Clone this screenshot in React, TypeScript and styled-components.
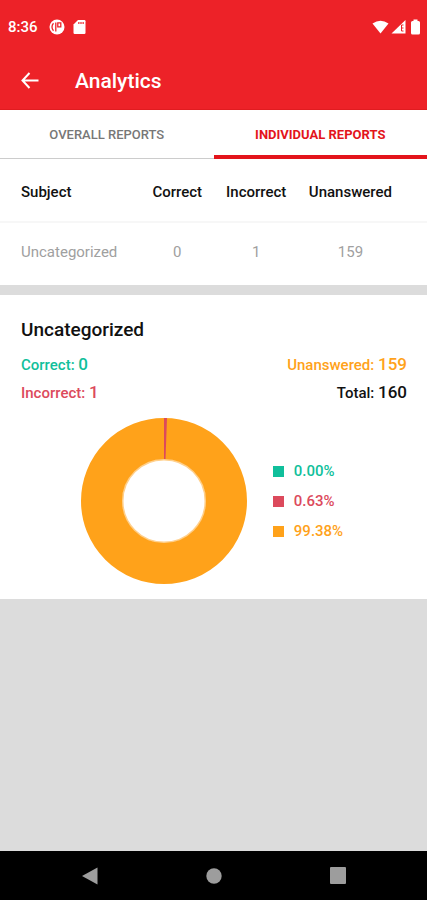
import React from 'react';
import styled, { createGlobalStyle } from 'styled-components';

const GlobalStyle = createGlobalStyle`
  * { box-sizing: border-box; }
  body { margin: 0; background: #dcdcdc; font-family: Roboto, sans-serif; }
  button { font-family: inherit; border: 0; padding: 0; background: none; cursor: pointer; }
`;

const Screen = styled.div`
  display: flex;
  flex-direction: column;
  min-height: 100vh;
`;

const Header = styled.header`
  background: #ed2228;
  color: #fff;
  border-bottom: 1px solid #e01c20;
`;

const StatusBar = styled.div`
  display: flex;
  align-items: center;
  justify-content: space-between;
  height: 53px;
  padding: 0 5px 0 8px;
`;

const StatusGroup = styled.div<{ $gap: number }>`
  display: flex;
  align-items: center;
  gap: ${(p) => p.$gap}px;
`;

const Clock = styled.span`
  font-size: 15px;
  line-height: 18px;
  font-weight: 500;
  margin-right: 3px;
`;

const AppBar = styled.div`
  display: flex;
  align-items: center;
  gap: 35px;
  height: 56px;
  padding: 0 20px;
`;

const BackButton = styled.button`
  display: flex;
  color: inherit;
`;

const Title = styled.h1`
  margin: 0;
  font-size: 21px;
  line-height: 28px;
  font-weight: 500;
`;

const Tabs = styled.div`
  display: grid;
  grid-template-columns: 1fr 1fr;
  background: #fff;
`;

const Tab = styled.button<{ $active?: boolean }>`
  height: 49px;
  font-size: 13px;
  line-height: 16px;
  font-weight: ${(p) => (p.$active ? 700 : 500)};
  color: ${(p) => (p.$active ? '#e3141b' : '#777')};
  border-top: ${(p) => (p.$active ? 4 : 1)}px solid transparent;
  border-bottom: ${(p) => (p.$active ? '4px solid #e3141b' : '1px solid #ccc')};
`;

const Report = styled.table`
  width: 100%;
  table-layout: fixed;
  border-collapse: separate;
  border-spacing: 0;
  background: #fff;
`;

const Col = styled.col<{ $share: number }>`
  width: ${(p) => p.$share}%;
`;

const HeadCell = styled.th`
  height: 64px;
  padding: 3px 0 0;
  border-bottom: 2px solid #f7f7f7;
  font-size: 15px;
  line-height: 20px;
  font-weight: 500;
  color: #111;
  &:first-child { padding-left: 21px; text-align: left; }
  &:last-child { padding-right: 25px; }
`;

const Cell = styled.td`
  height: 62px;
  padding: 0 0 4px;
  font-size: 15px;
  line-height: 20px;
  text-align: center;
  color: #a0a0a0;
  &:first-child { padding-left: 21px; text-align: left; }
  &:last-child { padding-right: 25px; }
`;

const Card = styled.section`
  margin-top: 10px;
  padding: 21px 20px 15px 21px;
  background: #fff;
`;

const CardTitle = styled.h2`
  margin: 0 0 7px;
  font-size: 19px;
  line-height: 28px;
  font-weight: 500;
  color: #111;
`;

const Totals = styled.div`
  display: grid;
  grid-template-columns: 1fr auto;
  grid-auto-rows: 28px;
`;

const Total = styled.div<{ $color: string; $end?: boolean }>`
  font-size: 15px;
  line-height: 28px;
  font-weight: 500;
  color: ${(p) => p.$color};
  text-align: ${(p) => (p.$end ? 'right' : 'left')};
`;

const Count = styled.span`
  font-size: 17px;
  line-height: 20px;
`;

const Chart = styled.div`
  display: flex;
  align-items: center;
  justify-content: center;
  gap: 26px;
  margin-top: 11px;
  padding-right: 4px;
`;

const Legend = styled.ul`
  margin: 0;
  padding: 0;
  list-style: none;
`;

const LegendItem = styled.li<{ $color: string }>`
  display: flex;
  align-items: center;
  gap: 10px;
  font-size: 15px;
  line-height: 30px;
  font-weight: 500;
  color: ${(p) => p.$color};
  &::before {
    content: '';
    width: 11px;
    height: 11px;
    background: currentColor;
  }
`;

const NavBar = styled.nav`
  display: grid;
  grid-template-columns: repeat(3, 124px);
  justify-content: center;
  height: 49px;
  margin-top: auto;
  background: #000;
`;

const NavButton = styled.button`
  display: flex;
  align-items: center;
  justify-content: center;
`;

const green = '#10bf9b';
const red = '#dc4a5c';
const orange = '#ffa21a';

const legend = [
  { color: green, value: '0.00%' },
  { color: red, value: '0.63%' },
  { color: orange, value: '99.38%' },
];

export default function App() {
  return (
    <Screen>
      <GlobalStyle />
      <Header>
        <StatusBar>
          <StatusGroup $gap={8}>
            <Clock>8:36</Clock>
            <svg width="16" height="16" viewBox="0 0 16 16" aria-hidden="true">
              <circle cx="8" cy="8" r="7.5" fill="#fff" />
              <path d="M6.800 3.500V12.500M4.500 4.200Q3 5.800 3 8T4.500 11.800M8.800 7.800V3.800h3v4Z" fill="none" stroke="#ed2228" strokeWidth="1.3" />
            </svg>
            <svg width="13" height="16" viewBox="0 0 13 16" aria-hidden="true">
              <path d="M5 1h6.300Q12.500 1 12.500 2.200v11.600q0 1.200-1.200 1.200H1.700Q.5 15 .5 13.800V5.500Z" fill="#fff" />
              <path d="M5 4h6" stroke="#ed2228" strokeWidth="1.400" strokeDasharray="1.600 .6" />
            </svg>
          </StatusGroup>
          <StatusGroup $gap={2}>
            <svg width="17" height="16" viewBox="0 0 17 16" aria-hidden="true">
              <path d="M.5 4.500Q8.500-1 16.500 4.500L8.500 14.500Z" fill="#fff" />
            </svg>
            <svg width="15" height="16" viewBox="0 0 15 16" aria-hidden="true">
              <path d="M.5 14.500 14.500 1v13.500Z" fill="#fff" />
              <path d="M12.500 6H10.500v6h2M10.500 9h2" fill="none" stroke="#ed2228" strokeWidth="1" />
            </svg>
            <svg width="14" height="16" viewBox="0 0 14 16" aria-hidden="true">
              <path d="M5.500 .5h4V2h1q1.500 0 1.500 1.500V14q0 1.500-1.500 1.500h-6Q3 15.500 3 14V3.500Q3 2 4.500 2h1Z" fill="#fff" />
            </svg>
          </StatusGroup>
        </StatusBar>
        <AppBar>
          <BackButton aria-label="Back">
            <svg width="20" height="20" viewBox="0 0 20 20" fill="none" stroke="currentColor" strokeWidth="2" aria-hidden="true">
              <path d="M18.500 9.500H3M9.500 2 2.500 9.500l7 7.500" />
            </svg>
          </BackButton>
          <Title>Analytics</Title>
        </AppBar>
      </Header>

      <Tabs role="tablist">
        <Tab role="tab" aria-selected={false}>OVERALL REPORTS</Tab>
        <Tab role="tab" aria-selected $active>INDIVIDUAL REPORTS</Tab>
      </Tabs>

      <Report>
        <colgroup>
          <Col $share={33} />
          <Col $share={17} />
          <Col $share={20} />
          <Col $share={30} />
        </colgroup>
        <thead>
          <tr>
            <HeadCell scope="col">Subject</HeadCell>
            <HeadCell scope="col">Correct</HeadCell>
            <HeadCell scope="col">Incorrect</HeadCell>
            <HeadCell scope="col">Unanswered</HeadCell>
          </tr>
        </thead>
        <tbody>
          <tr>
            <Cell>Uncategorized</Cell>
            <Cell>0</Cell>
            <Cell>1</Cell>
            <Cell>159</Cell>
          </tr>
        </tbody>
      </Report>

      <Card>
        <CardTitle>Uncategorized</CardTitle>
        <Totals>
          <Total $color={green}>Correct: <Count>0</Count></Total>
          <Total $color={orange} $end>Unanswered: <Count>159</Count></Total>
          <Total $color={red}>Incorrect: <Count>1</Count></Total>
          <Total $color="#111" $end>Total: <Count>160</Count></Total>
        </Totals>
        <Chart>
          <svg width="166" height="166" viewBox="-83 -83 166 166" role="img" aria-label="Share of answers">
            <circle r="41.500" fill="none" stroke="#ffd08c" strokeWidth="2" />
            <circle r="62.500" fill="none" stroke={orange} strokeWidth="41" />
            <path d="M0-42V-83A83 83 0 0 1 3-82.900L1.500-42Z" fill={red} />
          </svg>
          <Legend>
            {legend.map((item) => (
              <LegendItem key={item.value} $color={item.color}>{item.value}</LegendItem>
            ))}
          </Legend>
        </Chart>
      </Card>

      <NavBar>
        <NavButton aria-label="Back">
          <svg width="16" height="18" viewBox="0 0 16 18" aria-hidden="true"><path d="M0 9 15.500 .5v17Z" fill="#9d9d9d" /></svg>
        </NavButton>
        <NavButton aria-label="Home">
          <svg width="16" height="16" viewBox="0 0 16 16" aria-hidden="true"><circle cx="8" cy="8" r="7.700" fill="#9d9d9d" /></svg>
        </NavButton>
        <NavButton aria-label="Recent apps">
          <svg width="16" height="17" viewBox="0 0 16 17" aria-hidden="true"><rect width="16" height="17" rx="1" fill="#9d9d9d" /></svg>
        </NavButton>
      </NavBar>
    </Screen>
  );
}
